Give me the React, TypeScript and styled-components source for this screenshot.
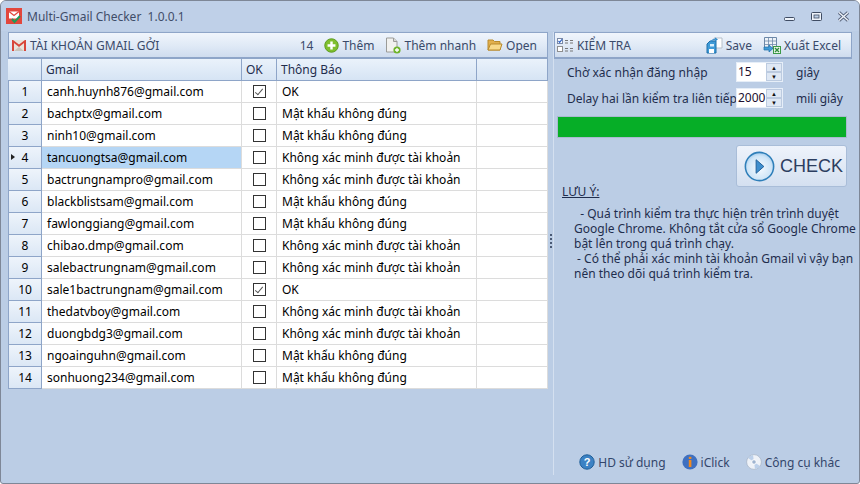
import React from "react";
import styled, { createGlobalStyle } from "styled-components";

const GlobalStyle = createGlobalStyle`
  html, body {
    margin: 0;
    padding: 0;
    background: #fff;
  }
  * {
    box-sizing: border-box;
  }
`;

const accounts = [
  { mail: "canh.huynh876@gmail.com", ok: true, note: "OK" },
  { mail: "bachptx@gmail.com", ok: false, note: "Mật khẩu không đúng" },
  { mail: "ninh10@gmail.com", ok: false, note: "Mật khẩu không đúng" },
  { mail: "tancuongtsa@gmail.com", ok: false, note: "Không xác minh được tài khoản" },
  { mail: "bactrungnampro@gmail.com", ok: false, note: "Không xác minh được tài khoản" },
  { mail: "blackblistsam@gmail.com", ok: false, note: "Mật khẩu không đúng" },
  { mail: "fawlonggiang@gmail.com", ok: false, note: "Mật khẩu không đúng" },
  { mail: "chibao.dmp@gmail.com", ok: false, note: "Không xác minh được tài khoản" },
  { mail: "salebactrungnam@gmail.com", ok: false, note: "Không xác minh được tài khoản" },
  { mail: "sale1bactrungnam@gmail.com", ok: true, note: "OK" },
  { mail: "thedatvboy@gmail.com", ok: false, note: "Không xác minh được tài khoản" },
  { mail: "duongbdg3@gmail.com", ok: false, note: "Không xác minh được tài khoản" },
  { mail: "ngoainguhn@gmail.com", ok: false, note: "Mật khẩu không đúng" },
  { mail: "sonhuong234@gmail.com", ok: false, note: "Mật khẩu không đúng" },
];

const App = () => {
  return (
    <Window>
      <GlobalStyle />
      <TitleBar>
        <AppLogo />
        <TitleText>Multi-Gmail Checker&nbsp; 1.0.0.1</TitleText>
        <WindowButtons>
          <MinIcon />
          <MaxIcon />
          <CloseIcon />
        </WindowButtons>
      </TitleBar>
      <Body>
        <LeftPanel>
          <Toolbar>
            <ToolLabel>
              <GmailIcon />
              <span>TÀI KHOẢN GMAIL GỞI</span>
            </ToolLabel>
            <ToolActions>
              <span>14</span>
              <ToolAction>
                <PlusIcon />
                Thêm
              </ToolAction>
              <ToolAction>
                <PageIcon />
                Thêm nhanh
              </ToolAction>
              <ToolAction>
                <FolderIcon />
                Open
              </ToolAction>
            </ToolActions>
          </Toolbar>
          <Grid>
            <HeaderRow>
              <HeadCell />
              <HeadCell>Gmail</HeadCell>
              <HeadCell>OK</HeadCell>
              <HeadCell>Thông Báo</HeadCell>
              <HeadCell />
            </HeaderRow>
            {accounts.map((acc, i) => (
              <Row key={acc.mail}>
                <RowHead $current={i === 3}>{i + 1}</RowHead>
                <Cell $selected={i === 3}>{acc.mail}</Cell>
                <CheckCell>
                  <CheckBox>{acc.ok && <CheckMark />}</CheckBox>
                </CheckCell>
                <Cell>{acc.note}</Cell>
                <Cell />
              </Row>
            ))}
          </Grid>
        </LeftPanel>
        <Splitter>
          <Grip />
        </Splitter>
        <RightPanel>
          <Toolbar>
            <ToolLabel>
              <ChecklistIcon />
              <span>KIỂM TRA</span>
            </ToolLabel>
            <ToolActions>
              <ToolAction>
                <SaveIcon />
                Save
              </ToolAction>
              <ToolAction>
                <ExcelIcon />
                Xuất Excel
              </ToolAction>
            </ToolActions>
          </Toolbar>
          <SettingRow>
            <SettingLabel>Chờ xác nhận đăng nhập</SettingLabel>
            <Spinner>
              <SpinValue>15</SpinValue>
              <SpinArrows>
                <SpinBtn>▲</SpinBtn>
                <SpinBtn>▼</SpinBtn>
              </SpinArrows>
            </Spinner>
            <Unit>giây</Unit>
          </SettingRow>
          <SettingRow>
            <SettingLabel>Delay hai lần kiểm tra liên tiếp</SettingLabel>
            <Spinner>
              <SpinValue>2000</SpinValue>
              <SpinArrows>
                <SpinBtn>▲</SpinBtn>
                <SpinBtn>▼</SpinBtn>
              </SpinArrows>
            </Spinner>
            <Unit>mili giây</Unit>
          </SettingRow>
          <Progress />
          <CheckRow>
            <CheckButton>
              <PlayIcon />
              CHECK
            </CheckButton>
          </CheckRow>
          <NoteTitle>LƯU Ý:</NoteTitle>
          <NoteText>
            &nbsp;&nbsp;- Quá trình kiểm tra thực hiện trên trình duyệt
            <br />
            Google Chrome. Không tắt cửa sổ Google Chrome
            <br />
            bật lên trong quá trình chạy.
            <br />
            &nbsp;- Có thể phải xác minh tài khoản Gmail vì vậy bạn
            <br />
            nên theo dõi quá trình kiểm tra.
          </NoteText>
          <Footer>
            <FooterLink>
              <HelpIcon />
              HD sử dụng
            </FooterLink>
            <FooterLink>
              <InfoIcon />
              iClick
            </FooterLink>
            <FooterLink>
              <DiscIcon />
              Công cụ khác
            </FooterLink>
          </Footer>
        </RightPanel>
      </Body>
    </Window>
  );
};

export default App;

function AppLogo() {
  return (
    <LogoSvg viewBox="0 0 16 16">
      <rect width="16" height="16" fill="#e2463c" />
      <path d="M3 3.5h10v7H3z" fill="#fff" />
      <path d="M3 3.5l5 4 5-4" fill="none" stroke="#e2463c" strokeWidth="1.3" />
      <path d="M6 11l2.5 3L14 8" fill="none" stroke="#1f9a58" strokeWidth="2" />
    </LogoSvg>
  );
}

function MinIcon() {
  return (
    <CaptionSvg viewBox="0 0 13 11">
      <rect x="1.5" y="6.5" width="10" height="3" rx="1" fill="#eef3fa" stroke="#3f4c63" />
    </CaptionSvg>
  );
}

function MaxIcon() {
  return (
    <CaptionSvg viewBox="0 0 13 11">
      <rect x="1.5" y="1.5" width="10" height="8" rx="1" fill="#eef3fa" stroke="#3f4c63" />
      <rect x="4" y="4" width="5" height="3" fill="#bccfe6" stroke="#3f4c63" strokeWidth="0.8" />
    </CaptionSvg>
  );
}

function CloseIcon() {
  return (
    <CaptionSvg viewBox="0 0 13 11">
      <path d="M2 1.5l9 8M11 1.5l-9 8" stroke="#56627a" strokeWidth="3.2" />
      <path d="M2 1.5l9 8M11 1.5l-9 8" stroke="#eef3fa" strokeWidth="1.4" />
    </CaptionSvg>
  );
}

function GmailIcon() {
  return (
    <IconSvg viewBox="0 0 16 16" width="16" height="16">
      <path d="M1 3h14v11H1z" fill="#e8e4dc" />
      <path d="M3 14V6l5 4 5-4v8h2V3h-1L8 7.5 2 3H1v11z" fill="#d8473a" />
      <path d="M3 14l5-4 5 4z" fill="#c9c4ba" />
    </IconSvg>
  );
}

function PlusIcon() {
  return (
    <IconSvg viewBox="0 0 16 16" width="15" height="15">
      <circle cx="8" cy="8" r="7.2" fill="#7fbf2e" stroke="#5b9a1d" />
      <path d="M8 3.8v8.4M3.8 8h8.4" stroke="#fff" strokeWidth="2.6" />
    </IconSvg>
  );
}

function PageIcon() {
  return (
    <IconSvg viewBox="0 0 16 17" width="16" height="17">
      <path d="M1.5 1h7l3.5 3.5V15h-10.5z" fill="#f1f1ef" stroke="#9b9b98" />
      <path d="M8.5 1v3.5H12" fill="#d9d9d6" stroke="#9b9b98" />
      <circle cx="12" cy="13" r="3.6" fill="#6fb42b" />
      <path d="M12 11v4M10 13h4" stroke="#fff" strokeWidth="1.3" />
    </IconSvg>
  );
}

function FolderIcon() {
  return (
    <IconSvg viewBox="0 0 16 14" width="16" height="14">
      <path d="M1 2h5l1.5 1.5H13V12H1z" fill="#e2b04e" stroke="#b98a2c" />
      <path d="M1 12l2.5-6H15l-2 6z" fill="#f8d98a" stroke="#b98a2c" />
    </IconSvg>
  );
}

function ChecklistIcon() {
  return (
    <IconSvg viewBox="0 0 17 16" width="17" height="16">
      <rect x="0.5" y="1.5" width="5" height="5" fill="#fff" stroke="#7b8aa8" />
      <path d="M1.5 4l1.2 1.4L5 2.4" fill="none" stroke="#2d62c4" strokeWidth="1.2" />
      <rect x="0.5" y="9.5" width="5" height="5" fill="#fff" stroke="#8e8e8e" />
      <path d="M8 3.5h3M13 3.5h3M8 6h3M13 6h3M8 11.5h3M13 11.5h3M8 14h3M13 14h3" stroke="#777" />
    </IconSvg>
  );
}

function SaveIcon() {
  return (
    <IconSvg viewBox="0 0 17 17" width="17" height="17">
      <path d="M8 1h8v10H8z" fill="#fff" stroke="#b6bfca" />
      <path d="M1 7l3-3h6v12H1z" fill="#3f9bd8" stroke="#1e6ea8" />
      <path d="M3 12h5v4H3z" fill="#fff" />
      <path d="M4 7h4v2.5H4z" fill="#d7eefb" />
      <path d="M4.5 5Q7 1.5 10.5 2.5M9 1l2 1.5-2 1.5" fill="none" stroke="#2f8acb" strokeWidth="1.1" />
    </IconSvg>
  );
}

function ExcelIcon() {
  return (
    <IconSvg viewBox="0 0 18 18" width="18" height="18">
      <path d="M1.5 1.5h12v11h-12z" fill="#eef3f8" stroke="#6d88a8" />
      <path d="M1.5 5h12M5.5 1.5v11M9.5 1.5v11M1.5 8.5h12" stroke="#6d88a8" strokeWidth="0.8" />
      <path d="M1 11h5V9l4 3.5L6 16v-2H1z" fill="#3f9bd8" stroke="#1e6ea8" strokeWidth="0.7" />
      <rect x="10.5" y="10.5" width="7" height="7" fill="#eaf5e6" stroke="#3d9a48" />
      <path d="M12 12l4 4M16 12l-4 4" stroke="#2a8a38" strokeWidth="1.3" />
    </IconSvg>
  );
}

function PlayIcon() {
  return (
    <IconSvg viewBox="0 0 32 32" width="31" height="31">
      <defs>
        <radialGradient id="playFill" cx="50%" cy="55%" r="60%">
          <stop offset="0" stopColor="#f6fbff" />
          <stop offset="0.7" stopColor="#cfe5f7" />
          <stop offset="1" stopColor="#8fc0e8" />
        </radialGradient>
      </defs>
      <circle cx="16" cy="16" r="14.6" fill="url(#playFill)" stroke="#2f7fb9" strokeWidth="1.6" />
      <path d="M12.5 9l8 7-8 7z" fill="#3f8fce" stroke="#1f5f99" />
    </IconSvg>
  );
}

function HelpIcon() {
  return (
    <IconSvg viewBox="0 0 16 16" width="16" height="16">
      <circle cx="8" cy="8" r="7.2" fill="#3c82c4" stroke="#1f5f99" />
      <text x="8" y="12" textAnchor="middle" fontSize="11" fontWeight="700" fontFamily="Liberation Sans, sans-serif" fill="#fff">
        ?
      </text>
    </IconSvg>
  );
}

function InfoIcon() {
  return (
    <IconSvg viewBox="0 0 16 16" width="16" height="16">
      <circle cx="8" cy="8" r="7.6" fill="#3f70c0" />
      <rect x="6.8" y="2.8" width="2.6" height="2.2" fill="#f28a1e" />
      <rect x="6.8" y="6" width="2.6" height="7" fill="#f28a1e" />
    </IconSvg>
  );
}

function DiscIcon() {
  return (
    <IconSvg viewBox="0 0 16 16" width="16" height="16">
      <circle cx="8" cy="8" r="7.4" fill="#eef2f8" stroke="#a9b6c8" strokeWidth="0.8" />
      <path d="M8 8L2 4a7 7 0 0 1 5-3zM8 8l6 4a7 7 0 0 1-5 3z" fill="#bcd0ea" />
      <circle cx="8" cy="8" r="2.3" fill="#9fb4d0" stroke="#fff" />
    </IconSvg>
  );
}

const LogoSvg = styled.svg`
  width: 16px;
  height: 16px;
  flex: none;
`;

const CaptionSvg = styled.svg`
  width: 13px;
  height: 11px;
`;

const IconSvg = styled.svg`
  flex: none;
`;

const Window = styled.div`
  width: 860px;
  height: 484px;
  display: flex;
  flex-direction: column;
  background: #bbcde5;
  border: 1px solid #7e8797;
  border-radius: 6px 6px 3px 3px;
  overflow: hidden;
  font-family: "Noto Sans", "Liberation Sans", sans-serif;
  font-size: 12px;
  color: #1f2d4d;
`;

const TitleBar = styled.div`
  height: 30px;
  flex: none;
  display: flex;
  align-items: center;
  padding: 0 9px 0 5px;
  gap: 5px;
  background: #bfd0e8;
`;

const TitleText = styled.span`
  color: #3f4d68;
  font-size: 12px;
`;

const WindowButtons = styled.div`
  margin-left: auto;
  display: flex;
  align-items: center;
  gap: 14px;
`;

const Body = styled.div`
  flex: 1;
  display: flex;
  padding: 1px 7px 8px 7px;
  min-height: 0;
`;

const LeftPanel = styled.div`
  width: 540px;
  flex: none;
  display: flex;
  flex-direction: column;
`;

const Toolbar = styled.div`
  height: 27px;
  flex: none;
  display: flex;
  align-items: center;
  justify-content: space-between;
  padding: 0 10px 0 2px;
  background: linear-gradient(#f0f5fc, #dfe9f6 55%, #cfdcee);
  border: 1px solid #8ea5c8;
  border-bottom-width: 2px;
  color: #3a4a6a;
`;

const ToolLabel = styled.div`
  display: flex;
  align-items: center;
  gap: 3px;
`;

const ToolActions = styled.div`
  display: flex;
  align-items: center;
  gap: 11px;
`;

const ToolAction = styled.div`
  display: flex;
  align-items: center;
  gap: 3px;
`;

const Grid = styled.div`
  display: flex;
  flex-direction: column;
  color: #000;
`;

const columns = "34px 200px 35px 200px 71px";

const HeaderRow = styled.div`
  display: grid;
  grid-template-columns: ${columns};
  height: 22px;
`;

const HeadCell = styled.div`
  display: flex;
  align-items: center;
  padding-left: 4px;
  background: linear-gradient(#eaf2fb, #d6e4f4);
  border-right: 1px solid #8ea5c8;
  border-bottom: 1px solid #8ea5c8;
  color: #1f2d4d;
`;

const Row = styled.div`
  display: grid;
  grid-template-columns: ${columns};
  height: 22px;
  background: #fff;
`;

const RowHead = styled.div<{ $current?: boolean }>`
  position: relative;
  display: flex;
  align-items: center;
  justify-content: center;
  background: linear-gradient(#eef4fb, #dbe7f5);
  border-right: 1px solid #8ea5c8;
  border-left: 1px solid #8ea5c8;
  border-bottom: 1px solid #8ea5c8;
  &::before {
    content: "";
    display: ${(p) => (p.$current ? "block" : "none")};
    position: absolute;
    left: 2px;
    top: 7px;
    border-left: 4px solid #222;
    border-top: 3.5px solid transparent;
    border-bottom: 3.5px solid transparent;
  }
`;

const Cell = styled.div<{ $selected?: boolean }>`
  display: flex;
  align-items: center;
  padding-left: 5px;
  white-space: nowrap;
  overflow: hidden;
  background: ${(p) => (p.$selected ? "#b5d6f5" : "#fff")};
  border-right: 1px solid #dcdcdc;
  border-bottom: 1px solid #dcdcdc;
`;

const CheckCell = styled.div`
  display: flex;
  align-items: center;
  justify-content: center;
  border-right: 1px solid #dcdcdc;
  border-bottom: 1px solid #dcdcdc;
`;

const CheckBox = styled.div`
  width: 13px;
  height: 13px;
  border: 1px solid #333;
  display: flex;
  align-items: center;
  justify-content: center;
`;

const CheckMark = styled.div`
  width: 4px;
  height: 8px;
  margin-top: -2px;
  border-right: 1.5px solid #555;
  border-bottom: 1.5px solid #555;
  transform: rotate(40deg);
`;

const Splitter = styled.div`
  width: 5px;
  flex: none;
  display: flex;
  align-items: center;
  justify-content: center;
`;

const Grip = styled.div`
  width: 2px;
  height: 16px;
  margin-bottom: 24px;
  background: repeating-linear-gradient(#4a5a75 0 2px, transparent 2px 4px);
`;

const RightPanel = styled.div`
  flex: 1;
  min-width: 0;
  display: flex;
  flex-direction: column;
  border-left: 1px solid #d4e0f0;
  padding-bottom: 0;
`;

const SettingRow = styled.div`
  display: flex;
  align-items: center;
  height: 26px;
  padding-left: 13px;
  &:first-of-type {
    margin-top: 2px;
  }
`;

const SettingLabel = styled.div`
  width: 169px;
  white-space: nowrap;
`;

const Spinner = styled.div`
  width: 47px;
  height: 20px;
  display: flex;
  background: #fff;
  border: 1px solid #e6eef8;
  color: #201030;
`;

const SpinValue = styled.div`
  flex: 1;
  padding-left: 1px;
  line-height: 17px;
`;

const SpinArrows = styled.div`
  width: 16px;
  display: flex;
  flex-direction: column;
`;

const SpinBtn = styled.div`
  flex: 1;
  display: flex;
  align-items: center;
  justify-content: center;
  font-size: 6px;
  line-height: 1;
  color: #111;
  background: #dfe8f4;
  border: 1px solid #bccbe0;
`;

const Unit = styled.div`
  margin-left: 13px;
`;

const Progress = styled.div`
  height: 22px;
  margin: 5px 5px 0 3px;
  background: #06ae27;
  border: 1px solid #a9bacf;
`;

const CheckRow = styled.div`
  display: flex;
  justify-content: flex-end;
  margin: 7px 5px 0 0;
`;

const CheckButton = styled.div`
  width: 111px;
  height: 42px;
  display: flex;
  align-items: center;
  gap: 5px;
  padding-left: 7px;
  background: linear-gradient(#eef3fb, #d4e0f0);
  border: 1px solid #a9bdd8;
  border-radius: 3px;
  font-family: "Liberation Sans", sans-serif;
  font-size: 18px;
  color: #2c3e60;
`;

const NoteTitle = styled.div`
  width: fit-content;
  margin: -3px 0 0 8px;
  line-height: 15px;
  text-decoration: underline;
`;

const NoteText = styled.div`
  margin: 7px 0 0 20px;
  line-height: 15px;
  white-space: nowrap;
`;

const Footer = styled.div`
  margin-top: auto;
  height: 24px;
  display: flex;
  align-items: center;
  justify-content: flex-end;
  gap: 16px;
  padding-right: 12px;
  margin-bottom: 1px;
  color: #33466b;
`;

const FooterLink = styled.div`
  display: flex;
  align-items: center;
  gap: 3px;
`;
